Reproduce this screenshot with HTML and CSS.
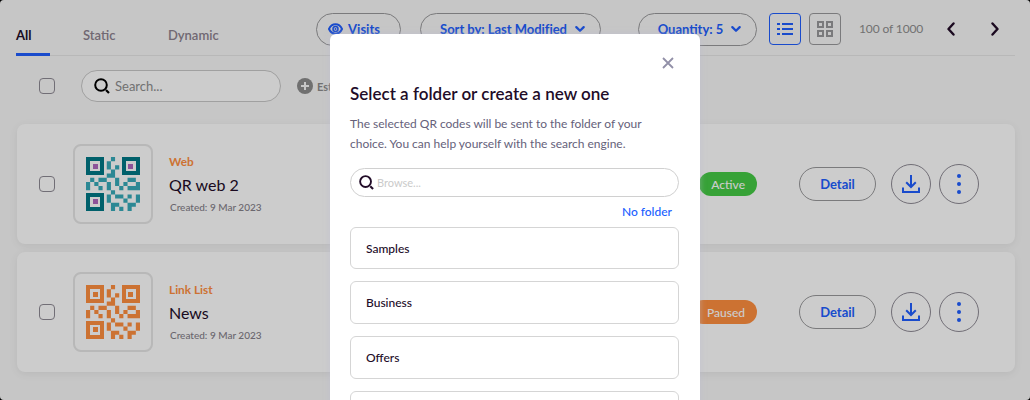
FILE: index.html
```
<!DOCTYPE html>
<html lang="en">
<head>
<meta charset="utf-8">
<title>QR codes</title>
<link rel="stylesheet" href="styles.css">
</head>
<body>
<svg class="defs" width="0" height="0">
  <symbol id="qr" viewBox="0 0 54 54">
    <path fill="none" stroke="var(--finder)" stroke-width="4" d="M2 2h14v14H2zM38 2h14v14H38zM2 38h14v14H2z"/>
    <path fill="var(--dot)" d="M7 7h5v5H7zM42 7h5v5h-5zM7 42h5v5H7z"/>
    <path fill="var(--cell)" transform="scale(4.154)" d="M6 0h1v1h-1zM5 1h1v2h-1zM7 2h1v1h-1zM6 3h1v1h-1zM5 4h2v1h-2zM1 5h1v1h-1zM3 5h2v1h-2zM7 5h1v2h-1zM10 5h2v1h-2zM0 6h1v2h-1zM2 6h1v1h-1zM5 6h1v2h-1zM9 6h1v1h-1zM12 6h1v2h-1zM3 7h1v1h-1zM8 7h1v1h-1zM10 7h2v1h-2zM6 8h1v1h-1zM5 9h1v2h-1zM7 9h2v1h-2zM10 9h1v1h-1zM12 9h1v2h-1zM9 10h1v1h-1zM6 11h2v1h-2zM10 11h2v1h-2zM6 12h1v1h-1zM8 12h1v1h-1zM10 12h1v1h-1z"/>
  </symbol>
  <symbol id="download" viewBox="0 0 20 20">
    <path fill="none" stroke="currentColor" stroke-width="2" d="M10 1v12M5.200 8.300l4.800 4.700 4.800-4.700M2 13.500V18h16v-4.500"/>
  </symbol>
  <symbol id="dots" viewBox="0 0 20 20">
    <g fill="currentColor"><circle cx="10" cy="2" r="2"/><circle cx="10" cy="10" r="2"/><circle cx="10" cy="18" r="2"/></g>
  </symbol>
  <symbol id="chevron" viewBox="0 0 10 6">
    <path fill="none" stroke="currentColor" stroke-width="2.200" stroke-linecap="round" stroke-linejoin="round" d="M1.300 1.100L5 4.800 8.700 1.100"/>
  </symbol>
  <symbol id="search" viewBox="0 0 16 16">
    <circle cx="7" cy="7" r="5.800" fill="none" stroke="currentColor" stroke-width="2"/>
    <path fill="none" stroke="currentColor" stroke-width="2.200" d="M12 12L15 15"/>
  </symbol>
</svg>

<div class="page">
  <header class="top">
    <nav class="tabs">
      <span class="tab active">All</span>
      <span class="tab">Static</span>
      <span class="tab">Dynamic</span>
    </nav>
    <div class="tools">
      <button class="pill visits"><svg width="15" height="12" viewBox="0 0 15 12"><path fill="none" stroke="currentColor" stroke-width="2" d="M1 6C3.800-.3 11.200-.3 14 6 11.200 12.300 3.800 12.300 1 6z"/><circle cx="7.500" cy="6" r="2.500" fill="none" stroke="currentColor" stroke-width="1.500"/><circle cx="7.500" cy="6" r="1" fill="currentColor"/></svg>Visits</button>
      <button class="pill sort">Sort by: Last Modified<svg width="10" height="6"><use href="#chevron"/></svg></button>
      <button class="pill quantity">Quantity: 5<svg width="10" height="6"><use href="#chevron"/></svg></button>
      <button class="view on"><svg width="16" height="12" viewBox="0 0 16 12"><path stroke="currentColor" stroke-width="2" d="M0 1h3M5 1h11M0 6h3M5 6h11M0 11h3M5 11h11"/></svg></button>
      <button class="view"><svg width="16" height="16" viewBox="0 0 16 16"><path fill="none" stroke="currentColor" stroke-width="2" d="M1 1h5v5H1zM10 1h5v5h-5zM1 10h5v5H1zM10 10h5v5h-5z"/></svg></button>
      <span class="count">100 of 1000</span>
      <svg class="arrow prev" width="8" height="14" viewBox="0 0 8 14"><path d="M6.500 1.500L1.500 7l5 5.500"/></svg>
      <svg class="arrow" width="8" height="14" viewBox="0 0 8 14"><path d="M1.500 1.500l5 5.500-5 5.500"/></svg>
    </div>
  </header>

  <div class="filters">
    <span class="check"></span>
    <div class="search"><svg width="16" height="16"><use href="#search"/></svg>Search...</div>
    <span class="state"><svg width="16" height="16" viewBox="0 0 16 16"><circle cx="8" cy="8" r="8" fill="currentColor"/><path stroke="#f8f8f8" stroke-width="2" d="M4 8h8M8 4v8"/></svg>Estado</span>
  </div>

  <main class="list">
    <article class="row teal">
      <span class="check"></span>
      <div class="thumb"><svg width="54" height="54"><use href="#qr"/></svg></div>
      <div class="info"><span class="kind">Web</span><span class="name">QR web 2</span><span class="date">Created: 9 Mar 2023</span></div>
      <span class="badge">Active</span>
      <button class="detail">Detail</button>
      <button class="round"><svg width="20" height="20"><use href="#download"/></svg></button>
      <button class="round"><svg width="20" height="20"><use href="#dots"/></svg></button>
    </article>
    <article class="row orange">
      <span class="check"></span>
      <div class="thumb"><svg width="54" height="54"><use href="#qr"/></svg></div>
      <div class="info"><span class="kind">Link List</span><span class="name">News</span><span class="date">Created: 9 Mar 2023</span></div>
      <span class="badge">Paused</span>
      <button class="detail">Detail</button>
      <button class="round"><svg width="20" height="20"><use href="#download"/></svg></button>
      <button class="round"><svg width="20" height="20"><use href="#dots"/></svg></button>
    </article>
  </main>

  <div class="overlay">
    <section class="modal">
      <svg class="close" width="12" height="12" viewBox="0 0 12 12"><path d="M1 1l10 10M11 1L1 11"/></svg>
      <h1>Select a folder or create a new one</h1>
      <p>The selected QR codes will be sent to the folder of your<br>choice. You can help yourself with the search engine.</p>
      <div class="browse"><svg width="15" height="15"><use href="#search"/></svg>Browse...</div>
      <a class="none">No folder</a>
      <div class="folders">
        <div class="folder">Samples</div>
        <div class="folder">Business</div>
        <div class="folder">Offers</div>
        <div class="folder"></div>
      </div>
    </section>
  </div>
</div>
</body>
</html>
```
FILE: styles.css
```
* { box-sizing: border-box; }
body { margin: 0; background: #000; font-family: Lato, sans-serif; overflow: hidden; }
svg { display: block; flex: none; }
.defs { position: absolute; }
button { font: inherit; background: none; padding: 0; margin: 0; }

.page {
  position: relative; height: 400px; padding: 0 15px 0 16px;
  background: #f8f8f8; border-radius: 4px; overflow: hidden;
  color: #220c28;
}

.top { display: flex; height: 56px; border-bottom: 1px solid #e6e6e6; }
.tabs { display: flex; width: 300px; }
.tab { height: 56px; padding-top: 27px; margin-right: 52.500px; font-size: 13px; line-height: 17px; font-weight: 600; color: #8d828f; }
.tab.active { width: 34px; margin-right: 33px; font-weight: 700; color: #220c28; border-bottom: 3px solid #205eff; }
.tools { display: flex; align-items: center; height: 34px; margin-top: 12px; }
.pill {
  display: flex; align-items: center; justify-content: center; flex: none; height: 33px;
  border: 1px solid #99999b; border-radius: 17px;
  color: #205eff; font-size: 13px; font-weight: 700;
}
.visits { width: 85px; gap: 5px; margin-right: 19px; padding-right: 9px; }
.sort { width: 181px; gap: 8px; margin-right: 37px; padding-left: 4px; letter-spacing: -.03px; }
.quantity { width: 119px; gap: 8px; margin-right: 12px; padding-left: 4px; }
.view {
  display: flex; align-items: center; justify-content: center; flex: none;
  width: 32px; height: 32px; margin-right: 8px;
  border: 1px solid #99999b; border-radius: 4px; color: #99999b;
}
.view.on { border-color: #205eff; color: #205eff; }
.count { width: 80px; margin: -1px 0 0 10px; font-size: 12px; letter-spacing: -.12px; color: #8e8e8e; white-space: nowrap; }
.arrow { margin-left: 7px; fill: none; stroke: #220c28; stroke-width: 2.4; stroke-linecap: round; stroke-linejoin: round; }
.arrow.prev { margin-left: 7.500px; margin-right: 29.500px; }

.filters { display: flex; align-items: center; height: 60px; padding-left: 23px; }
.check { flex: none; width: 16px; height: 16px; border: 1px solid #8e8a94; border-radius: 4px; }
.search {
  display: flex; align-items: center; gap: 5px; width: 200px; height: 32px;
  margin: 0 16px 0 26px; padding-left: 12px;
  border: 1px solid #c8c8c8; border-radius: 16px; background: #fff;
  font-size: 13px; color: #8e8e8e;
}
.search svg { color: #000; }
.state { display: flex; align-items: center; gap: 4px; font-size: 11px; font-weight: 700; color: #8c8c8c; }

.list { display: flex; flex-direction: column; gap: 8px; padding-top: 8px; }
.row {
  display: flex; align-items: center; height: 120px; padding: 0 36px 0 23px; margin-left: 1px;
  background: #fff; border-radius: 8px; box-shadow: 0 2px 8px rgba(0,0,0,.07);
}
.row .check { margin-left: -1px; }
.teal { --finder: #007886; --cell: #38abb9; --dot: #b068c0; --badge: #45cb45; --badge-text: 8px; }
.orange { --finder: #ff8f3f; --cell: #ff8f3f; --dot: #ff8f3f; --badge: #ff8f3f; --badge-text: 16px; }
.thumb {
  display: flex; align-items: center; justify-content: center; flex: none;
  width: 80px; height: 80px; margin: 0 16px 0 18px;
  border: 2px solid #e6e6e6; border-radius: 8px;
}
.info { display: flex; flex-direction: column; flex: 1 1 0; }
.kind { font-size: 11.8px; line-height: 16px; font-weight: 700; color: #ff8f3f; }
.name { margin-top: 5px; font-size: 16px; line-height: 20px; font-weight: 400; }
.date { margin: 5px 0 0 1px; font-size: 10px; line-height: 14px; font-weight: 500; color: #85818a; }
.badge {
  display: flex; justify-content: flex-end; flex: none;
  height: 24px; min-width: 58px; margin: 0 42px 0 auto; padding: 0 12px 0 var(--badge-text); border-radius: 12px;
  background: var(--badge); color: #fff; font-size: 12px; line-height: 25px; font-weight: 500;
}
.detail {
  flex: none; width: 77px; height: 34px; margin-right: 15px;
  border: 1px solid #99999b; border-radius: 17px;
  color: #205eff; font-size: 13px; font-weight: 700;
}
.round {
  display: flex; align-items: center; justify-content: center; flex: none;
  width: 40px; height: 40px; border: 1px solid #8e8a94; border-radius: 50%; color: #205eff;
}
.round + .round { margin-left: 8px; }

.overlay {
  position: absolute; inset: 0; display: flex; justify-content: center; align-items: flex-start;
  padding-top: 34px; background: rgba(0,0,0,.2);
}
.modal {
  display: flex; flex-direction: column; flex: none; width: 370px; height: 500px; padding: 23px 21px 0 20px;
  background: #fff; border-radius: 6px; box-shadow: 0 0 6px rgba(190,190,215,.5);
}
.close { align-self: flex-end; margin-right: 5px; fill: none; stroke: #9290a8; stroke-width: 1.8; }
.modal h1 { margin: 14px 0 0; font-size: 17.05px; line-height: 22px; font-weight: 600; }
.modal p { margin: 9px 0 0; font-size: 12px; line-height: 20px; letter-spacing: -.01px; color: #65617a; white-space: nowrap; }
.browse {
  display: flex; align-items: center; gap: 3px; height: 29px; margin-top: 14px; padding-left: 8px;
  border: 1px solid #d0d0d0; border-radius: 15px; font-size: 11px; color: #cacaca;
}
.browse svg { color: #220c28; }
.none { align-self: flex-end; margin: 6px 7px 0 0; font-size: 12px; line-height: 18px; font-weight: 500; color: #205eff; }
.folders { display: flex; flex-direction: column; gap: 12px; margin-top: 5.700px; }
.folder {
  height: 42.700px; padding-left: 15px; border: 1px solid #d5d5d5; border-radius: 6px;
  font-size: 12px; line-height: 41.500px; font-weight: 500;
}
```
